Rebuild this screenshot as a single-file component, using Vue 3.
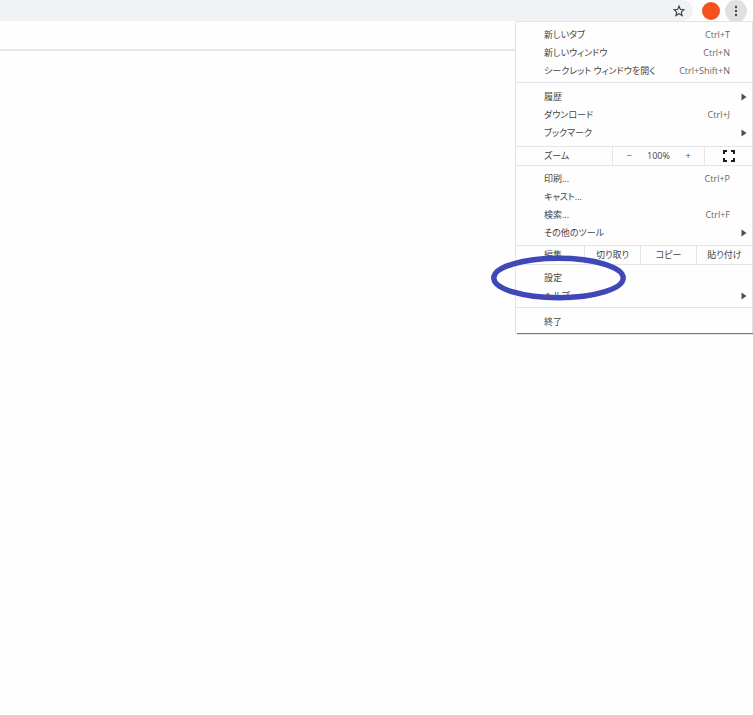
<script setup>
const firstGroups = [
  [
    { label: '新しいタブ', key: 'Ctrl+T' },
    { label: '新しいウィンドウ', key: 'Ctrl+N' },
    { label: 'シークレット ウィンドウを開く', key: 'Ctrl+Shift+N' },
  ],
  [
    { label: '履歴', sub: true },
    { label: 'ダウンロード', key: 'Ctrl+J' },
    { label: 'ブックマーク', sub: true },
  ],
]
const toolItems = [
  { label: '印刷...', key: 'Ctrl+P' },
  { label: 'キャスト...' },
  { label: '検索...', key: 'Ctrl+F' },
  { label: 'その他のツール', sub: true },
]
const settingItems = [{ label: '設定', marked: true }, { label: 'ヘルプ', sub: true }]
const groups = [
  { kind: 'list', name: 'open', items: firstGroups[0] },
  { kind: 'list', name: 'history', items: firstGroups[1] },
  { kind: 'zoom', name: 'zoom' },
  { kind: 'list', name: 'tools', items: toolItems },
  { kind: 'edit', name: 'edit' },
  { kind: 'list', name: 'settings', items: settingItems },
  { kind: 'list', name: 'exit', items: [{ label: '終了' }] },
]
</script>

<template>
  <div class="browser">
    <header class="toolbar">
      <div class="address">
        <button class="icon-button" type="button" aria-label="ブックマークに追加">
          <svg width="12" height="12" viewBox="0 0 12 12">
            <path d="M6 1.1 7.4 4.4 11 4.7 8.3 7.1 9.1 10.6 6 8.7 2.9 10.6 3.7 7.1 1 4.7 4.6 4.4Z" fill="none" stroke="#45484c" stroke-width="1.2" />
          </svg>
        </button>
      </div>
      <button class="icon-button avatar" type="button" aria-label="プロフィール"></button>
      <button class="icon-button more" type="button" aria-label="メニュー">
        <svg width="4" height="12" viewBox="0 0 4 12" fill="#45484c">
          <circle cx="2" cy="2" r="1.2" />
          <circle cx="2" cy="6" r="1.2" />
          <circle cx="2" cy="10" r="1.2" />
        </svg>
      </button>
    </header>
    <div class="bookmarks"></div>

    <nav class="menu">
      <section v-for="g in groups" :key="g.name" :class="['group', g.kind, g.name]">
        <template v-if="g.kind === 'list'">
          <button v-for="item in g.items" :key="item.label" class="item" type="button">
            <span>{{ item.label }}</span>
            <span v-if="item.key" class="key">{{ item.key }}</span>
            <svg v-if="item.sub" class="arrow" width="6" height="8" viewBox="0 0 6 8">
              <path d="M0.5 0.5 5.5 4 0.5 7.5Z" fill="#4c4c4c" />
            </svg>
            <svg v-if="item.marked" class="ring" width="136" height="46" viewBox="0 0 136 46">
              <ellipse cx="67.5" cy="23" rx="64.7" ry="19.7" fill="none" stroke="#4048b8" stroke-width="5.4" />
            </svg>
          </button>
        </template>
        <template v-else-if="g.kind === 'zoom'">
          <span class="row-label">ズーム</span>
          <div class="zoom-controls">
            <button type="button">−</button>
            <span>100%</span>
            <button type="button">+</button>
          </div>
          <button class="fullscreen" type="button" aria-label="全画面表示">
            <svg width="12" height="12" viewBox="0 0 12 12">
              <path d="M1 4V1H4M8 1H11V4M11 8V11H8M4 11H1V8" fill="none" stroke="#1c1c1c" stroke-width="2" />
            </svg>
          </button>
        </template>
        <template v-else>
          <span class="row-label">編集</span>
          <button class="cell" type="button">切り取り</button>
          <button class="cell" type="button">コピー</button>
          <button class="cell" type="button">貼り付け</button>
        </template>
      </section>
    </nav>
  </div>
</template>

<style>
body {
  background: #fefefe;
}
</style>

<style scoped>
.browser {
  position: relative;
  min-height: 100vh;
  font-family: "Open Sans", "Noto Sans CJK JP", sans-serif;
  font-size: 9px;
  line-height: 18px;
  font-feature-settings: "palt";
  color: #444;
}
button {
  margin: 0;
  padding: 0;
  border: 0;
  background: none;
  font: inherit;
  font-feature-settings: inherit;
  color: inherit;
}
.toolbar {
  display: flex;
  align-items: center;
  height: 21px;
  padding-right: 6px;
}
.address {
  display: flex;
  flex: 1;
  align-items: center;
  justify-content: flex-end;
  height: 21px;
  padding-right: 8px;
  margin-right: 9px;
  border-radius: 0 11px 11px 0;
  background: #f1f2f4;
}
.icon-button {
  display: flex;
  align-items: center;
  justify-content: center;
}
.avatar {
  width: 18px;
  height: 18px;
  margin-right: 5px;
  border-radius: 50%;
  background: #f4511e;
}
.more {
  width: 22px;
  height: 22px;
  border-radius: 50%;
  background: #dfe0e1;
}
.bookmarks {
  height: 28px;
  border-bottom: 2px solid #e6e7e8;
}
.menu {
  position: absolute;
  top: 21px;
  right: 0;
  width: 238px;
  box-sizing: border-box;
  border: 1px solid #e2e3e4;
  border-bottom: 0;
  background: #fefefe;
  box-shadow: 2px 1px 1px #777;
}
.group + .group {
  border-top: 1px solid #e4e5e6;
}
.list {
  padding: 4px 0 2px;
}
.history {
  padding: 5px 0 4px;
}
.tools {
  padding: 4px 0 3px;
}
.exit {
  padding: 5px 0 2px;
}
.item {
  position: relative;
  display: flex;
  align-items: center;
  justify-content: space-between;
  width: 100%;
  height: 18px;
  padding: 0 22px 0 28px;
}
.key {
  color: #666;
}
.arrow {
  position: absolute;
  right: 5px;
  top: 5px;
}
.ring {
  position: absolute;
  left: -25px;
  top: -14px;
  z-index: 1;
  pointer-events: none;
}
.zoom,
.edit {
  display: flex;
  height: 18px;
}
.row-label {
  flex: 1;
  padding-left: 28px;
}
.zoom-controls {
  display: grid;
  grid-template-columns: 32px 27px 32px;
  text-align: center;
  border-left: 1px solid #e4e5e6;
}
.fullscreen {
  display: flex;
  align-items: center;
  justify-content: center;
  width: 48px;
  border-left: 1px solid #e4e5e6;
}
.cell {
  width: 56px;
  border-left: 1px solid #e4e5e6;
}
</style>
